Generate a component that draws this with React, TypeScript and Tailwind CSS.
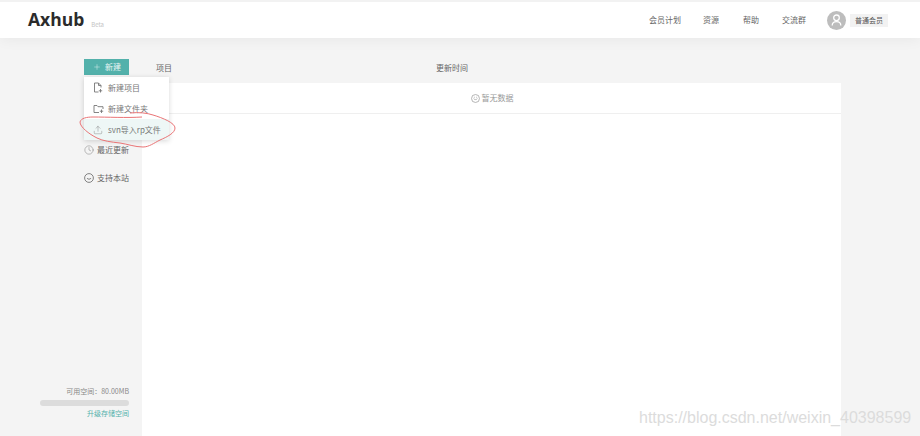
import { FC } from "react";
import { Clock, Plus, Upload } from "lucide-react";

const navItems = [
	{ label: "会员计划", className: "ml-0" },
	{ label: "资源", className: "ml-[22px]" },
	{ label: "帮助", className: "ml-[24px]" },
	{ label: "交流群", className: "ml-[23px]" },
];

const FileIcon: FC = () => (
	<svg width="10" height="11" viewBox="0 0 10 11" fill="none" stroke="currentColor" strokeWidth="0.9">
		<path d="M5.5 10H1.5V1H5.5L8 3.5V5.5" />
		<path d="M5.5 1V3.5H8" />
		<path d="M7.5 7V10.5M5.8 8.8H9.2" />
	</svg>
);

const FolderIcon: FC = () => (
	<svg width="11" height="10" viewBox="0 0 11 10" fill="none" stroke="currentColor" strokeWidth="0.9">
		<path d="M6 8.5H1V1.5H4L5 2.7H10V5" />
		<path d="M8.5 5.5V9M6.8 7.2H10.2" />
	</svg>
);

const SmileIcon: FC<{ size: number; eyes?: boolean }> = ({ size, eyes }) => (
	<svg width={size} height={size} viewBox="0 0 10 10" fill="none" stroke="currentColor" strokeWidth="0.8">
		<circle cx="5" cy="5" r="4.4" />
		<path d="M3 5C3.4 6.6 6.6 6.6 7 5" />
		{eyes && <path d="M3.2 3.6H4.2M5.8 3.6H6.8" />}
	</svg>
);

const Header: FC = () => (
	<div className="h-[38px] bg-white border-t-2 border-[#f2f2f2] shadow-[0_2px_14px_rgba(0,0,0,0.05)] flex items-center pl-[28px] pr-[32px] relative z-10">
		<span className="text-[17.5px] leading-none font-bold text-[#2b2b2b] font-['Open_Sans',sans-serif]">Axhub</span>
		<span className="text-[6px] text-[#c4c4c4] ml-[7px] mt-[8px]">Beta</span>
		<div className="ml-auto flex items-center text-[8px] text-[#666]">
			{navItems.map((item) => (
				<span key={item.label} className={`whitespace-nowrap ${item.className}`}>{item.label}</span>
			))}
			<div className="w-[19px] h-[19px] rounded-full bg-[#bdbdbd] flex items-center justify-center ml-[21px]">
				<svg width="11" height="12" viewBox="0 0 11 12" fill="none" stroke="#fff" strokeWidth="1.3">
					<circle cx="5.5" cy="3.8" r="2.8" />
					<path d="M1.2 11.5C1.2 8.6 3 7.6 5.5 7.6C8 7.6 9.8 8.6 9.8 11.5" />
				</svg>
			</div>
			<span className="ml-[4px] h-[13px] w-[38px] flex items-center justify-center bg-[#f2f2f2] text-[7px] text-[#555] whitespace-nowrap">普通会员</span>
		</div>
	</div>
);

const Dropdown: FC = () => (
	<div className="absolute left-[84px] top-[77px] w-[85px] h-[63px] bg-white shadow-[0_1px_5px_rgba(0,0,0,0.16)] flex flex-col z-20 text-[8px] text-[#777]">
		<div className="h-[21px] flex items-center pl-[9px] whitespace-nowrap">
			<span className="w-[15px] flex"><FileIcon /></span>
			<span>新建项目</span>
		</div>
		<div className="h-[21px] flex items-center pl-[9px] whitespace-nowrap">
			<span className="w-[15px] flex"><FolderIcon /></span>
			<span>新建文件夹</span>
		</div>
		<div className="h-[21px] flex items-center pl-[9px] bg-[#eef7f6] whitespace-nowrap">
			<span className="w-[15px] flex"><Upload size={10} strokeWidth={1} /></span>
			<span>svn导入rp文件</span>
		</div>
	</div>
);

const Sidebar: FC = () => (
	<div className="w-[142px] shrink-0 flex flex-col pl-[84px] pr-[13px] pt-[21px] pb-[18px] text-[8px] text-[#666]">
		<div className="w-[45px] h-[16px] bg-[#53b1ab] text-[#e8f5f4] flex items-center pl-[9px] gap-[4px] whitespace-nowrap">
			<Plus size={8} strokeWidth={1.4} />
			<span>新建</span>
		</div>
		<div className="mt-[68px] flex items-center gap-[3px] h-[13px] whitespace-nowrap">
			<Clock size={10} strokeWidth={1} />
			<span>最近更新</span>
		</div>
		<div className="mt-[15px] flex items-center gap-[3px] h-[13px] whitespace-nowrap">
			<SmileIcon size={10} />
			<span>支持本站</span>
		</div>
		<div className="mt-auto -ml-[44px] flex flex-col items-end whitespace-nowrap">
			<span className="text-[7px] leading-[10px] text-[#888]">可用空间：80.00MB</span>
			<div className="w-full h-[6px] rounded-full bg-[#dcdcdc] mt-[4px]" />
			<span className="text-[7px] leading-[10px] text-[#53b1ab] mt-[2px]">升级存储空间</span>
		</div>
	</div>
);

const Main: FC = () => (
	<div className="w-[699px] flex flex-col">
		<div className="h-[45px] flex items-center text-[8px] text-[#666] pt-[14px] pl-[14px] whitespace-nowrap">
			<span>项目</span>
			<span className="ml-[264px]">更新时间</span>
		</div>
		<div className="flex-1 bg-white">
			<div className="h-[31px] border-b border-[#efefef] flex items-center justify-center gap-[2px] text-[8px] text-[#999] pl-[1px] whitespace-nowrap">
				<SmileIcon size={9} eyes />
				<span>暂无数据</span>
			</div>
		</div>
	</div>
);

export default function App() {
	return (
		<div className="w-[920px] h-[436px] overflow-hidden relative bg-[#f4f4f4] flex flex-col font-['Noto_Sans_CJK_SC','Noto_Sans',sans-serif]">
			<Header />
			<div className="flex-1 flex min-h-0">
				<Sidebar />
				<Main />
			</div>
			<Dropdown />
			{/* hand-drawn red circle over the menu item */}
			<svg className="absolute left-[75px] top-[110px] z-30" width="106" height="42" viewBox="0 0 106 42" fill="none">
				<path
					d="M55 3 C64 2 72 3 78 5 C88 8 100 13 100 18 C100 23 92 27 85 30 C79 33 74 37 68 37 C60 37 52 34 45 33 C36 32 28 31 22 28 C14 24 5 17 5 12 C6 8 12 7 18 7 C32 7 52 8 67 7"
					stroke="#ea7476"
					strokeWidth="1"
				/>
			</svg>
			<span className="absolute left-[639px] top-[408px] z-30 text-[16px] leading-[20px] text-[#dcdcdc] font-['Liberation_Sans',sans-serif] whitespace-nowrap">https://blog.csdn.net/weixin_40398599</span>
		</div>
	);
}
